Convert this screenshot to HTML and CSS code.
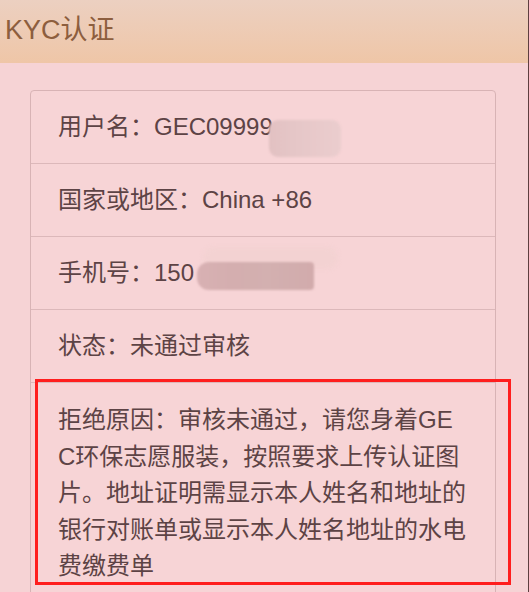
FILE: index.html
```html
<!DOCTYPE html>
<html lang="zh-CN">
<head>
<meta charset="utf-8">
<title>KYC认证</title>
<link rel="stylesheet" href="styles.css">
</head>
<body>
<div class="page">
  <header class="header">KYC认证</header>
  <main class="main">
    <section class="card">
      <div class="row">用户名：GEC09999<span class="mask mask-user"></span></div>
      <div class="row">国家或地区：China +86</div>
      <div class="row">手机号：150<span class="halo"></span><span class="mask mask-phone"></span></div>
      <div class="row">状态：未通过审核</div>
      <div class="row reason">拒绝原因：审核未通过，请您身着GEC环保志愿服装，按照要求上传认证图片。地址证明需显示本人姓名和地址的银行对账单或显示本人姓名地址的水电费缴费单<span class="highlight"></span></div>
    </section>
  </main>
</div>
</body>
</html>
```

FILE: styles.css
```css
html, body {
  margin: 0;
  padding: 0;
}

body {
  background: #f6d3d5;
  font-family: "Liberation Sans", "Noto Sans CJK SC", sans-serif;
  overflow: hidden;
}

.page {
  width: 529px;
  height: 592px;
  box-sizing: border-box;
  border-right: 1px solid #5e3f40;
  overflow: hidden;
}

.header {
  height: 63px;
  box-sizing: border-box;
  padding-left: 5px;
  line-height: 60px;
  font-size: 27px;
  color: #8d5e3e;
  background: linear-gradient(#ecd0c1, #efc6a7);
}

.main {
  padding: 27px 0 0 30px;
}

.card {
  width: 466px;
  box-sizing: border-box;
  border: 1px solid #d8b3b5;
  border-radius: 4px;
  background: #f7d4d6;
}

.row {
  position: relative;
  height: 72px;
  padding: 0 27px;
  line-height: 72px;
  font-size: 24px;
  color: #5d4345;
  border-bottom: 1px solid #dcb8ba;
}

.row.reason {
  height: auto;
  padding: 19px 27px 20px;
  line-height: 36.5px;
  word-break: break-all;
  border-bottom: none;
}

.mask {
  position: absolute;
  filter: blur(0.8px);
}

.mask-user {
  left: 238px;
  top: 29px;
  width: 72px;
  height: 37px;
  border-radius: 9px;
  background: linear-gradient(90deg, #e2c1c2 0%, #e6c7c8 40%, #ebcdce 100%);
}

.halo {
  position: absolute;
  left: 172px;
  top: 10px;
  width: 135px;
  height: 22px;
  border-radius: 12px;
  background: #f3d2d2;
  filter: blur(2px);
}

.mask-phone {
  left: 166px;
  top: 25px;
  width: 117px;
  height: 28px;
  border-radius: 12px 4px 4px 12px;
  background: linear-gradient(90deg, #d8b1b3 0%, #d4aeaf 30%, #d3b0b0 60%, #d2abac 100%);
}

.highlight {
  position: absolute;
  left: 4px;
  top: -4px;
  width: 476px;
  height: 206px;
  box-sizing: border-box;
  border: 3px solid #ff1e1e;
}
```
